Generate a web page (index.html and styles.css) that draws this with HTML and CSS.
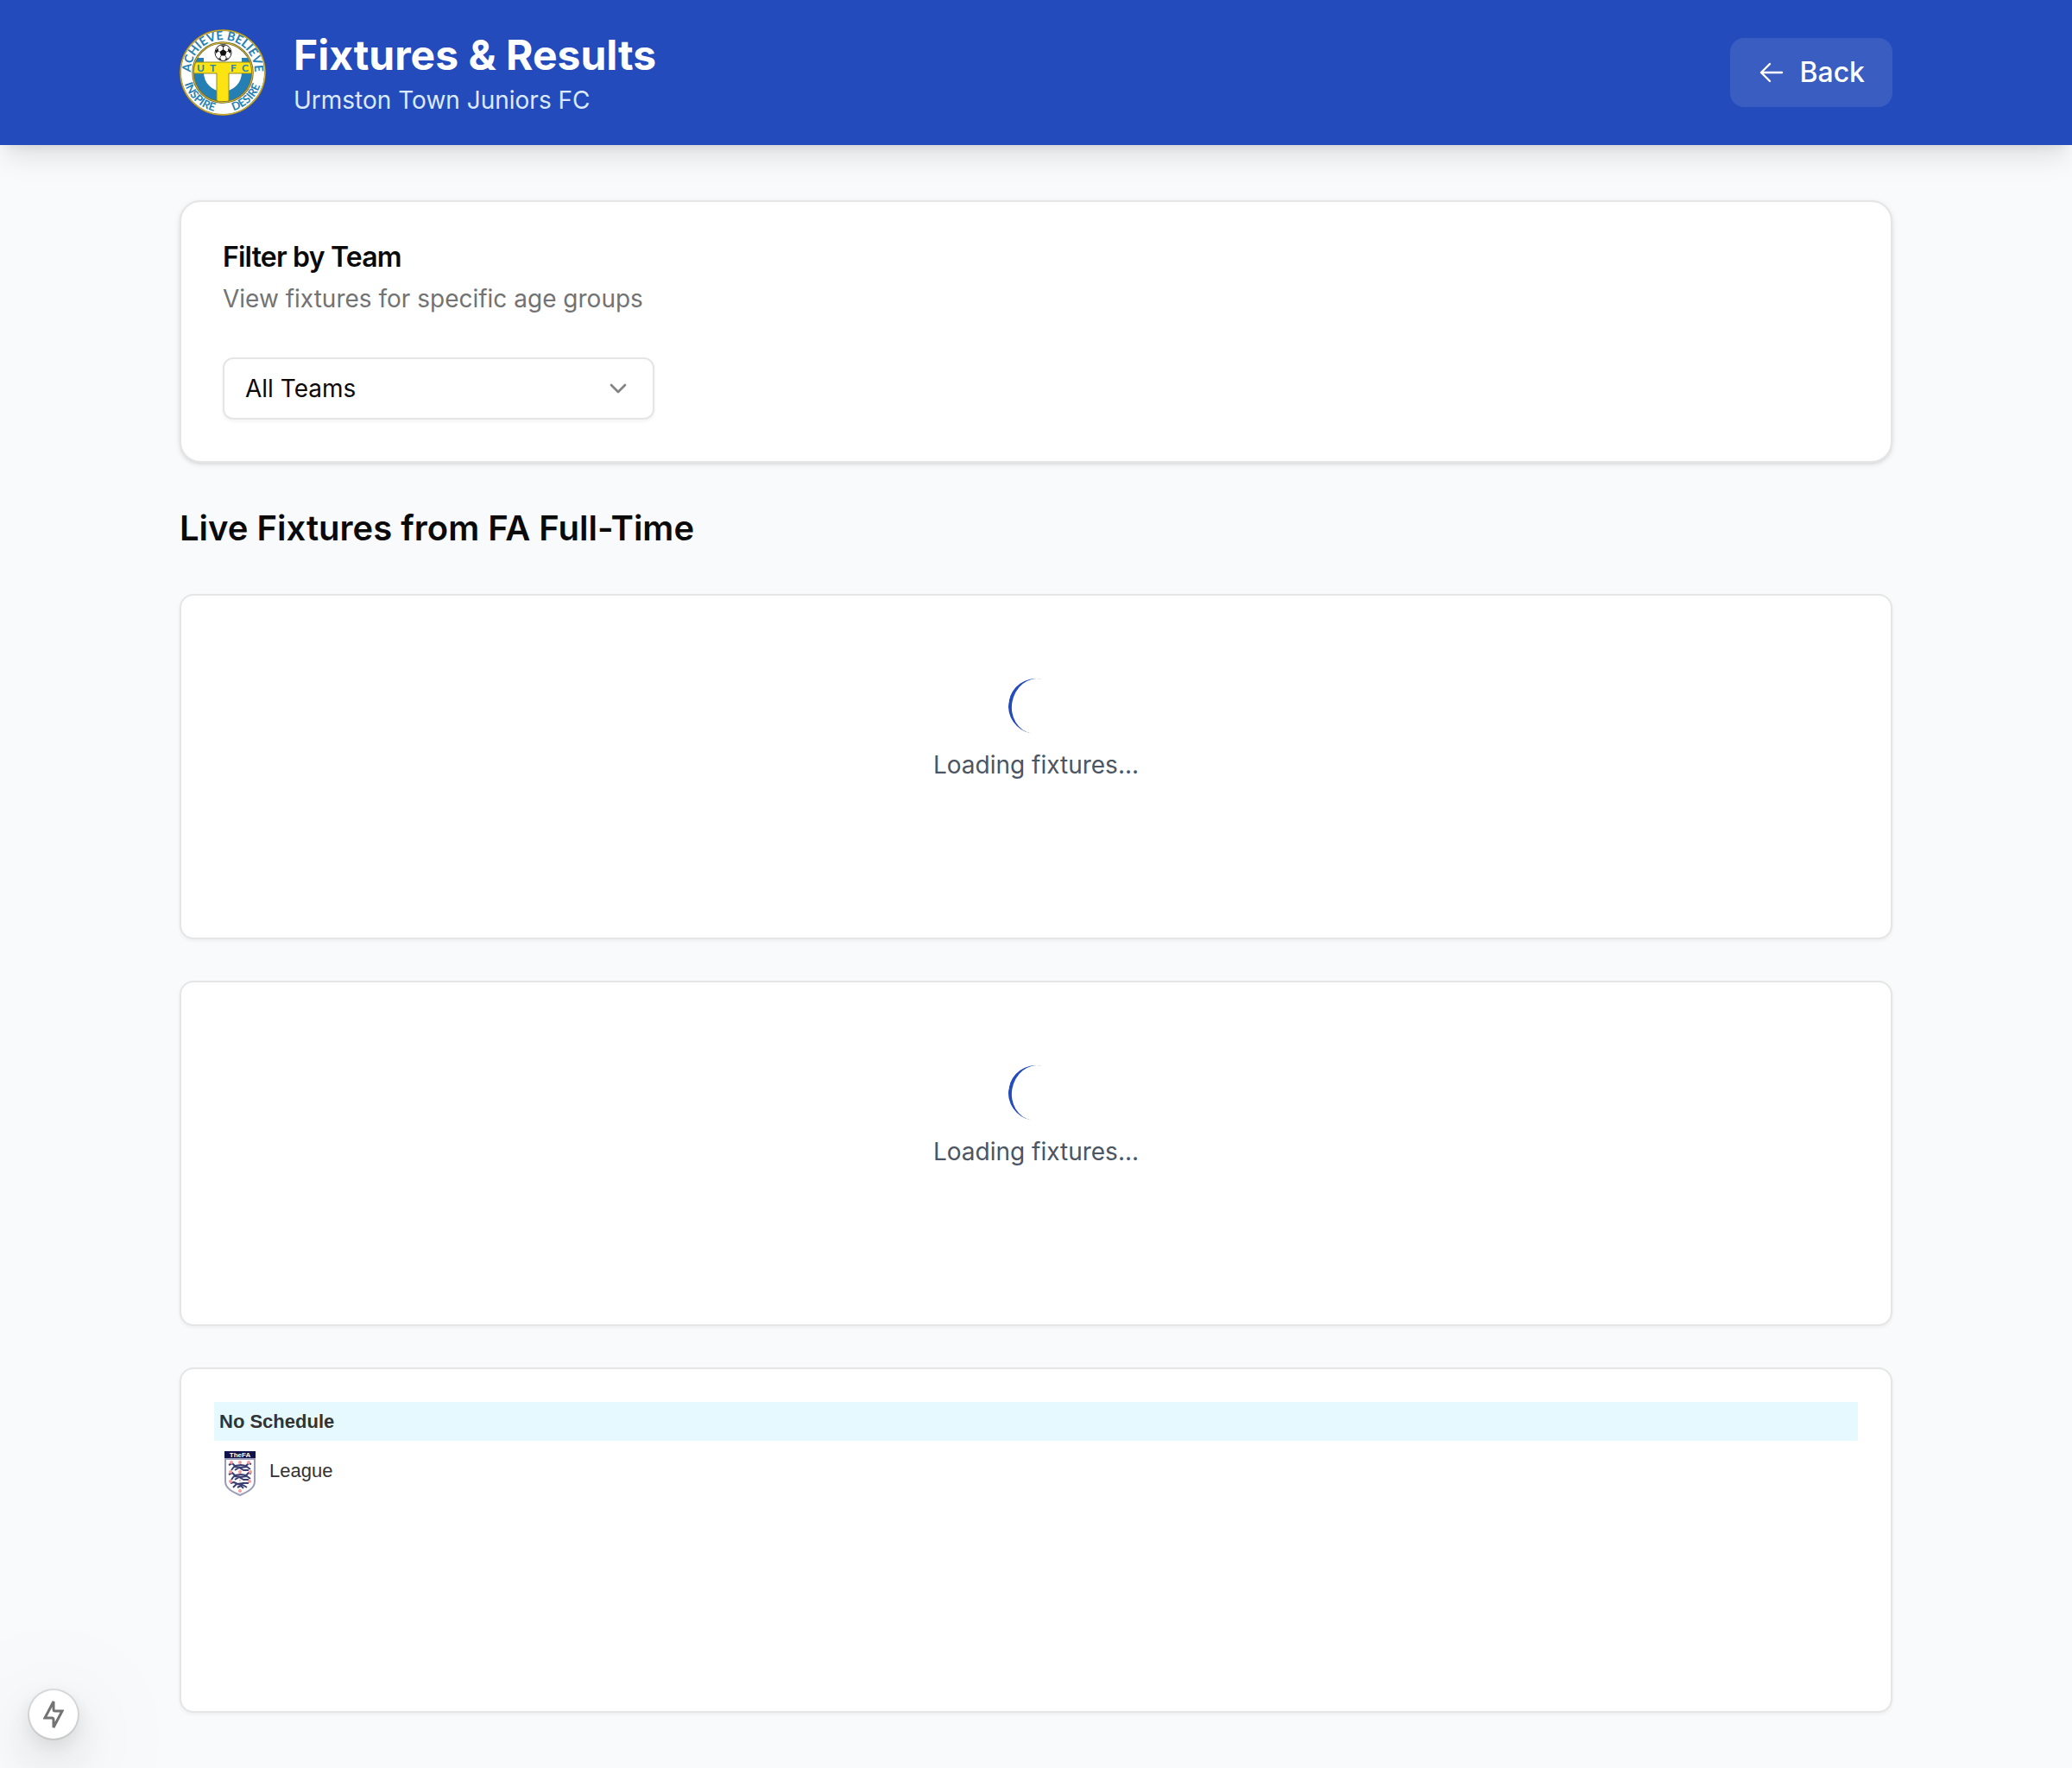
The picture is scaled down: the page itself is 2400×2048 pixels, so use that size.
FILE: index.html
```html
<!DOCTYPE html>
<html lang="en">
<head>
<meta charset="utf-8">
<meta name="viewport" content="width=device-width, initial-scale=1">
<title>Fixtures &amp; Results</title>
<link rel="stylesheet" href="styles.css">
</head>
<body>
<header class="site-header">
  <div class="container header-row">
    <svg class="crest" viewBox="0 0 100 100" role="img" aria-label="Club crest">
      <defs>
        <path id="arc-top" d="M16.200 64A37 37 0 1 1 83.800 64"/>
        <path id="arc-bottom" d="M4 50a46 46 0 0 0 92 0"/>
        <clipPath id="disc"><circle cx="50" cy="50" r="34"/></clipPath>
      </defs>
      <circle cx="50" cy="50" r="49" fill="#fff" stroke="#8d7a2c" stroke-width="2"/>
      <g clip-path="url(#disc)">
        <path d="M14 33h14v17a22 22 0 0 0 44 0V33h14v53H14z" fill="#2480b4"/>
        <path d="M14 38h72v13H57v35H43V51H14z" fill="#fde312" stroke="#8d8a2c" stroke-width="1"/>
      </g>
      <circle cx="50" cy="50" r="34.500" fill="none" stroke="#6d6530" stroke-width="2.500"/>
      <circle cx="50" cy="50" r="34.500" fill="none" stroke="#e3c32b" stroke-width="1"/>
      <circle cx="50" cy="50" r="49" fill="none" stroke="#d9bd3a" stroke-width="1"/>
      <circle cx="50.500" cy="27" r="9.500" fill="#fff" stroke="#222" stroke-width="1"/>
      <path d="M50.500 23l4 3-1.500 4.500h-5L46.500 26zM47 18.500h7l-3.500 2zM41.500 25l3-3.500.5 3.500-2.500 3zM59.500 25l-3-3.500-.5 3.500 2.500 3zM44 33.500l3.500 0 1 2.500zM57 33.500l-3.500 0-1 2.500z" fill="#111"/>
      <path d="M50.500 23v-3M54.500 26l2-1M53 30.500l1.500 3M48 30.500l-1.500 3M46.500 26l-2-1" stroke="#222" stroke-width=".8"/>
      <g class="crest-text">
        <text class="crest-initials" x="20 35 59 72" y="49">UTFC</text>
        <text><textPath href="#arc-top" startOffset="50%" text-anchor="middle">ACHIEVE BELIEVE</textPath></text>
        <text class="crest-motto"><textPath href="#arc-bottom" startOffset="26%" text-anchor="middle">INSPIRE</textPath></text>
        <text class="crest-motto"><textPath href="#arc-bottom" startOffset="74%" text-anchor="middle">DESIRE</textPath></text>
      </g>
    </svg>
    <div class="titles">
      <h1 class="title">Fixtures &amp; Results</h1>
      <p class="subtitle">Urmston Town Juniors FC</p>
    </div>
    <button class="back" type="button">
      <svg class="icon" viewBox="0 0 24 24" fill="none" stroke="currentColor" stroke-width="1.800" stroke-linecap="round" stroke-linejoin="round" aria-hidden="true"><path d="M10.500 19.500L3 12m0 0l7.500-7.500M3 12h18"/></svg>
      Back
    </button>
  </div>
</header>

<main class="container main">
  <section class="filter-card">
    <h2 class="card-title">Filter by Team</h2>
    <label class="card-desc" for="team">View fixtures for specific age groups</label>
    <div class="select-wrap">
      <select class="select" id="team"><option>All Teams</option></select>
      <svg class="icon chevron" viewBox="0 0 24 24" fill="none" stroke="currentColor" stroke-width="2" stroke-linecap="round" stroke-linejoin="round" aria-hidden="true"><path d="M6 9l6 6 6-6"/></svg>
    </div>
  </section>

  <h2 class="section-title">Live Fixtures from FA Full-Time</h2>

  <section class="panel loading">
    <div class="spinner"></div>
    <p class="loading-text">Loading fixtures...</p>
  </section>
  <section class="panel loading">
    <div class="spinner"></div>
    <p class="loading-text">Loading fixtures...</p>
  </section>
  <section class="panel schedule">
    <h3 class="schedule-head">No Schedule</h3>
    <div class="league">
      <svg class="fa-badge" viewBox="0 0 36 52" aria-hidden="true">
        <path d="M1 9h34v26c0 8-8 12-17 16C9 47 1 43 1 35z" fill="#fff" stroke="#9a9cb8" stroke-width="2"/>
        <path d="M0 0h36v8H0z" fill="#10124a"/>
        <text class="fa-text" x="18" y="7" text-anchor="middle">TheFA</text>
        <g fill="none" stroke="#3a3d70" stroke-width="2" stroke-linejoin="round">
          <path id="lion" d="M5 16l4-2 3 3 7-1 6 1 3-3 3 1M8 22l3-4 8 1 7-1 4 3M12 22l5-3 5 3 6 0"/>
          <use href="#lion" y="11"/>
          <path d="M7 37l4-1 4 2 7-1 6 0M10 42l4-4 7 1 5 3M15 42l4-2 3 3"/>
        </g>
        <g fill="#f49a9c"><circle cx="8" cy="13" r="2"/><circle cx="18" cy="13" r="2"/><circle cx="28" cy="13" r="2"/><circle cx="7" cy="24" r="2"/><circle cx="18" cy="24" r="2"/><circle cx="30" cy="24" r="2"/><circle cx="7" cy="35" r="2"/><circle cx="18" cy="34" r="1"/><circle cx="29" cy="35" r="2"/><circle cx="18" cy="46" r="2"/></g>
      </svg>
      <span class="league-name">League</span>
    </div>
  </section>
</main>

<button class="fab" type="button" aria-label="Quick actions">
  <svg class="bolt" viewBox="0 0 24 32" fill="none" stroke="#737373" stroke-width="3" aria-hidden="true"><path d="M12 1L2 20h8q2 0 2 2v9L22 12h-8q-2 0-2-2z"/></svg>
</button>
</body>
</html>
```
FILE: styles.css
```css
* { box-sizing: border-box; margin: 0; }

body {
  min-height: 100vh;
  background: #f9fafb;
  color: #0a0a0a;
  font: 400 28px/40px Inter, "Liberation Sans", sans-serif;
}

.container {
  max-width: 2048px;
  margin: 0 auto;
  padding: 0 32px;
}

.icon { width: 32px; height: 32px; flex: none; }

.site-header {
  padding: 32px 0;
  background: #244bbc;
  color: #fff;
  box-shadow: 0 20px 30px -6px rgba(0, 0, 0, .1), 0 8px 12px -8px rgba(0, 0, 0, .1);
}
.header-row { display: flex; align-items: center; gap: 32px; }
.crest { width: 100px; height: 100px; flex: none; }
.crest-text { font: 700 14px Lato, sans-serif; fill: #2480b4; }
.crest-initials { font-size: 12px; }
.crest-motto { font-size: 13px; }
.titles { flex: 1; }
.title { font-size: 48px; line-height: 64px; font-weight: 700; }
.subtitle { color: #dbeafe; }
.back {
  display: flex;
  align-items: center;
  gap: 16px;
  height: 80px;
  padding: 0 32px;
  border: 0;
  border-radius: 16px;
  background: rgba(255, 255, 255, .1);
  color: #fff;
  font: 500 32px/48px Inter, sans-serif;
}

.main { padding-top: 64px; padding-bottom: 64px; }

.filter-card {
  padding: 48px;
  border: 2px solid #e5e5e5;
  border-radius: 24px;
  background: #fff;
  box-shadow: 0 2px 6px rgba(0, 0, 0, .1), 0 2px 4px -2px rgba(0, 0, 0, .1);
}
.card-title {
  margin-bottom: 12px;
  font-size: 32px;
  line-height: 32px;
  font-weight: 600;
  letter-spacing: -.025em;
}
.card-desc { display: block; color: #737373; }
.select-wrap {
  position: relative;
  max-width: 500px;
  margin-top: 48px;
}
.select {
  display: block;
  width: 100%;
  height: 72px;
  padding: 0 24px;
  appearance: none;
  border: 2px solid #e5e5e5;
  border-radius: 12px;
  background: #fff;
  color: inherit;
  font: inherit;
  box-shadow: 0 2px 4px rgba(0, 0, 0, .05);
}
.chevron {
  position: absolute;
  top: 20px;
  right: 26px;
  opacity: .5;
  pointer-events: none;
}

.section-title {
  margin: 48px 0;
  font-size: 40px;
  line-height: 56px;
  font-weight: 600;
}

.panel {
  min-height: 400px;
  border: 2px solid #e5e5e5;
  border-radius: 16px;
  background: #fff;
  box-shadow: 0 2px 4px rgba(0, 0, 0, .05);
}
.panel + .panel { margin-top: 48px; }

.loading {
  display: flex;
  flex-direction: column;
  align-items: center;
  gap: 16px;
  padding: 96px 0;
}
.spinner {
  width: 64px;
  height: 64px;
  border-radius: 50%;
  border-bottom: 4px solid #244bbc;
  transform: rotate(100deg);
}
.loading-text { color: #4b5563; }

.schedule {
  padding: 38px;
  color: #333;
  font: 22px/26px "Liberation Sans", Arial, sans-serif;
}
.schedule-head {
  padding: 10px 6px;
  background: #e6f9ff;
  font-size: 22px;
  line-height: 25px;
}
.league {
  display: flex;
  align-items: flex-start;
  gap: 16px;
  padding: 12px;
}
.league-name { line-height: 46px; }
.fa-badge { width: 36px; height: 52px; }
.fa-text { font: 700 8px "Liberation Sans", sans-serif; fill: #fff; }

.fab {
  position: fixed;
  left: 34px;
  bottom: 34px;
  display: grid;
  place-items: center;
  width: 56px;
  height: 56px;
  padding: 0;
  border: 0;
  border-radius: 50%;
  background: #fff;
  box-shadow: 0 0 0 2px rgba(0, 0, 0, .1), 0 8px 24px rgba(0, 0, 0, .1), 0 24px 64px rgba(0, 0, 0, .14), 0 24px 140px 24px rgba(0, 0, 0, .06);
}
.bolt { width: 24px; height: 32px; }
```
